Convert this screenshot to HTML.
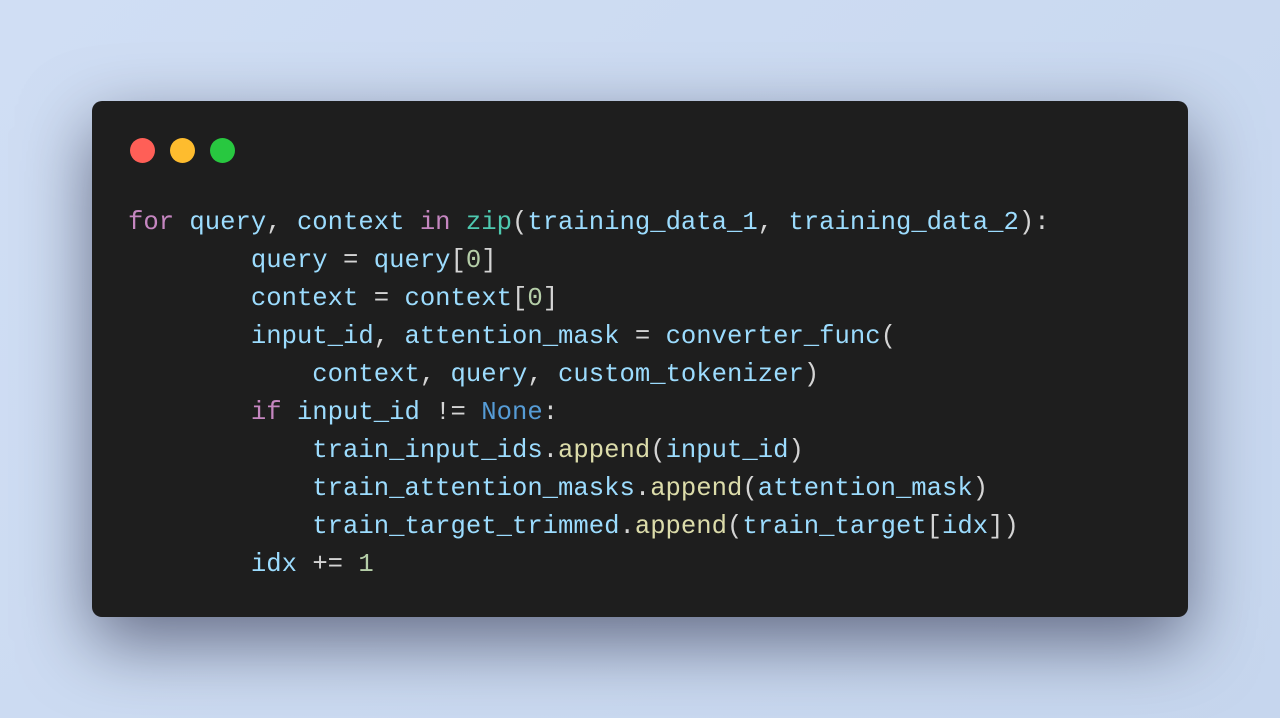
<!DOCTYPE html>
<html><head><style>
html,body{margin:0;padding:0;}
body{width:1280px;height:718px;background:linear-gradient(135deg,#d0def4,#c6d6ee);position:relative;overflow:hidden;}
.win{position:absolute;left:92px;top:101px;width:1096px;height:516px;background:#1e1e1e;border-radius:10px;box-shadow:0 25px 70px rgba(0,0,30,0.5);}
.d{position:absolute;top:138px;width:25px;height:25px;border-radius:50%;}
pre{position:absolute;left:128px;top:204px;margin:0;font-family:"Liberation Mono",monospace;font-size:25.6px;line-height:38px;color:#9cdcfe;}
.k{color:#c586c0}.f{color:#4ec9b0}.p{color:#d4d4d4}.n{color:#b5cea8}.m{color:#dcdcaa}.c{color:#569cd6}
</style></head><body>
<div class="win"></div>
<div class="d" style="left:130px;background:#ff5f57"></div>
<div class="d" style="left:170px;background:#febc2e"></div>
<div class="d" style="left:210px;background:#28c840"></div>
<pre><span class="k">for</span> query<span class="p">,</span> context <span class="k">in</span> <span class="f">zip</span><span class="p">(</span>training_data_1<span class="p">,</span> training_data_2<span class="p">):</span>
        query <span class="p">=</span> query<span class="p">[</span><span class="n">0</span><span class="p">]</span>
        context <span class="p">=</span> context<span class="p">[</span><span class="n">0</span><span class="p">]</span>
        input_id<span class="p">,</span> attention_mask <span class="p">=</span> converter_func<span class="p">(</span>
            context<span class="p">,</span> query<span class="p">,</span> custom_tokenizer<span class="p">)</span>
        <span class="k">if</span> input_id <span class="p">!=</span> <span class="c">None</span><span class="p">:</span>
            train_input_ids<span class="p">.</span><span class="m">append</span><span class="p">(</span>input_id<span class="p">)</span>
            train_attention_masks<span class="p">.</span><span class="m">append</span><span class="p">(</span>attention_mask<span class="p">)</span>
            train_target_trimmed<span class="p">.</span><span class="m">append</span><span class="p">(</span>train_target<span class="p">[</span>idx<span class="p">])</span>
        idx <span class="p">+=</span> <span class="n">1</span></pre>
</body></html>
